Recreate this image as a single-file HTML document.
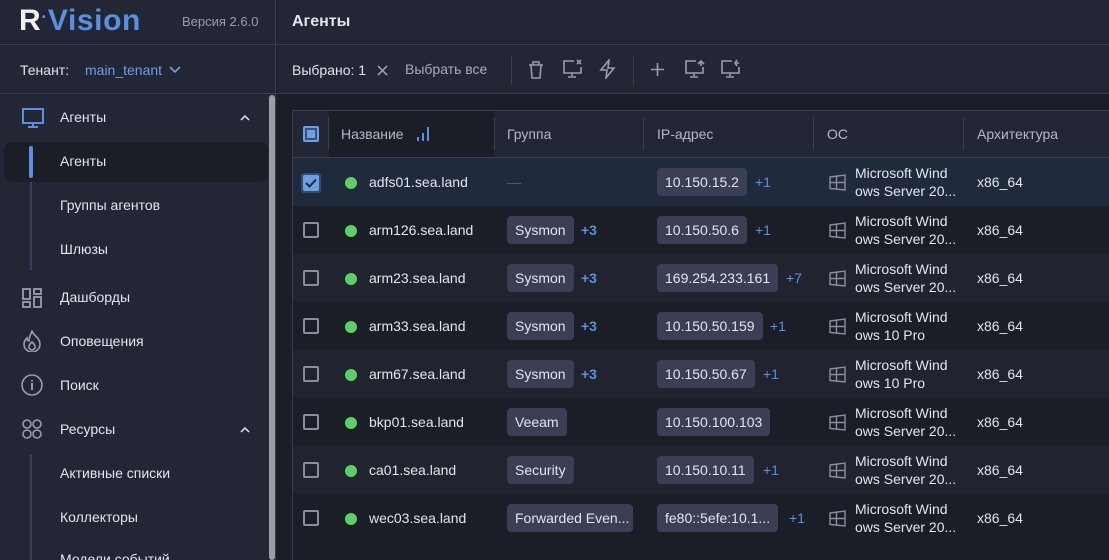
<!DOCTYPE html>
<html style="width:1109px;height:560px;overflow:hidden"><head><meta charset="utf-8"><style>
*{margin:0;padding:0;box-sizing:border-box}
body{width:1109px;height:560px;overflow:hidden;background:#1b1d27;font-family:"Liberation Sans",sans-serif;color:#e3e5ec;font-size:14px;position:relative}
.a{position:absolute}
.sb{left:0;top:0;width:276px;height:560px;background:#232634;border-right:1px solid #3a3e52}
.hl{height:1px;background:#3a3e52}
.nav{left:60px;font-size:14px;color:#e3e5ec}
.tag{position:absolute;height:28px;line-height:28px;padding:0 8px;background:#3b3f55;border-radius:4px;color:#e3e5ec;font-size:14px;white-space:nowrap}
.plus{position:absolute;color:#5b8fe0;font-size:14px}
.row{position:absolute;left:293px;width:816px;height:48px}
.cb{position:absolute;left:303px;width:16px;height:16px;border:2px solid #8a8d9b;border-radius:2px}
.dot{position:absolute;left:345px;width:12px;height:12px;border-radius:50%;background:#5fcf65}
.os{position:absolute;left:855px;font-size:14px;line-height:18px;color:#e3e5ec}
.th{position:absolute;top:126px;color:#b4b8c6;font-size:14px}
.sep{position:absolute;top:118px;width:1px;height:32px;background:#3a3e52}
</style></head><body>
<div class="a sb"></div>
<div class="a" style="left:19px;top:4px;font-size:30px;font-weight:bold;letter-spacing:0.6px;white-space:nowrap"><span style="color:#f0f0f2">R</span><span style="color:#5b8fe0;font-size:18px;vertical-align:7px">·</span><span style="color:#5b8fe0">Vision</span></div>
<div class="a" style="left:182px;top:14px;font-size:13px;color:#9a9dab">Версия 2.6.0</div>
<div class="a hl" style="left:0;top:44px;width:1109px"></div>
<div class="a" style="left:20px;top:62px;font-size:14px;color:#e3e5ec">Тенант:</div>
<div class="a" style="left:85px;top:62px;font-size:14px;color:#6d9ee8">main_tenant</div>
<svg class="a" style="left:169px;top:66px" width="12" height="8"><path d="M1 1l5 5 5-5" stroke="#6d9ee8" stroke-width="1.6" fill="none"/></svg>
<div class="a hl" style="left:0;top:93px;width:1109px"></div>
<div class="a" style="left:269px;top:95px;width:6px;height:465px;background:#9a9ca6;border-radius:3px"></div>
<svg class="a" style="left:22px;top:108px" width="22" height="20"><rect x="1" y="1" width="20" height="14" fill="none" stroke="#5b8fe0" stroke-width="2"/><path d="M11 15v3M6 19h10" stroke="#5b8fe0" stroke-width="2"/></svg>
<div class="a nav" style="top:109px">Агенты</div>
<svg class="a" style="left:240px;top:114px" width="10" height="7"><path d="M1 6l4-4 4 4" stroke="#e3e5ec" stroke-width="1.5" fill="none"/></svg>
<div class="a" style="left:4px;top:142px;width:264px;height:40px;background:#1b1d27;border-radius:8px"></div>
<div class="a" style="left:29px;top:146px;width:4px;height:32px;background:#5b8fe0;border-radius:2px"></div>
<div class="a" style="left:30px;top:182px;width:2px;height:88px;background:#3a3e60"></div>
<div class="a nav" style="top:153px">Агенты</div>
<div class="a nav" style="top:197px">Группы агентов</div>
<div class="a nav" style="top:241px">Шлюзы</div>
<svg class="a" style="left:22px;top:288px" width="20" height="20" fill="none" stroke="#9a9dab" stroke-width="1.8"><rect x="1" y="1" width="7" height="10"/><rect x="12" y="1" width="7" height="5"/><rect x="1" y="14" width="7" height="5"/><rect x="12" y="9" width="7" height="10"/></svg>
<div class="a nav" style="top:289px">Дашборды</div>
<svg class="a" style="left:22px;top:330px" width="20" height="22" fill="none" stroke="#9a9dab" stroke-width="1.6"><path d="M10 1c1 4 8 7 8 13a8 8 0 0 1-16 0c0-3 2-5 3-6 0 2 1 3 2 3 0-4 2-7 3-10z"/><path d="M10 12c2 2 3 3 3 5a3 3 0 0 1-6 0c0-2 1-3 3-5z"/></svg>
<div class="a nav" style="top:333px">Оповещения</div>
<svg class="a" style="left:21px;top:374px" width="22" height="22" fill="none" stroke="#9a9dab" stroke-width="1.6"><circle cx="11" cy="11" r="10"/><path d="M11 9v7M11 6v1.5" stroke-width="2"/></svg>
<div class="a nav" style="top:377px">Поиск</div>
<svg class="a" style="left:22px;top:419px" width="20" height="20" fill="none" stroke="#9a9dab" stroke-width="1.6"><circle cx="5" cy="5" r="4"/><circle cx="15" cy="5" r="4"/><circle cx="5" cy="15" r="4"/><circle cx="15" cy="15" r="4"/></svg>
<div class="a nav" style="top:421px">Ресурсы</div>
<svg class="a" style="left:240px;top:426px" width="10" height="7"><path d="M1 6l4-4 4 4" stroke="#e3e5ec" stroke-width="1.5" fill="none"/></svg>
<div class="a" style="left:30px;top:454px;width:2px;height:106px;background:#3a3e60"></div>
<div class="a nav" style="top:465px">Активные списки</div>
<div class="a nav" style="top:509px">Коллекторы</div>
<div class="a nav" style="top:551px">Модели событий</div>
<div class="a" style="left:277px;top:0;width:832px;height:93px;background:#232634"></div>
<div class="a hl" style="left:277px;top:44px;width:832px"></div>
<div class="a hl" style="left:277px;top:93px;width:832px"></div>
<div class="a" style="left:292px;top:13px;font-size:16px;font-weight:bold;color:#e3e5ec">Агенты</div>
<div class="a" style="left:292px;top:62px;font-size:14px">Выбрано: 1</div>
<svg class="a" style="left:377px;top:65px" width="11" height="11"><path d="M1 1l9 9M10 1l-9 9" stroke="#9a9dab" stroke-width="1.6"/></svg>
<div class="a" style="left:405px;top:61px;font-size:14px;color:#a8acbb">Выбрать все</div>
<div class="a" style="left:511px;top:55px;width:1px;height:30px;background:#3a3e52"></div>
<div class="a" style="left:633px;top:55px;width:1px;height:30px;background:#3a3e52"></div>
<svg class="a" style="left:526px;top:60px" width="20" height="20" fill="none" stroke="#9a9dab" stroke-width="1.6"><path d="M3 5h14M7 5V2h6v3M5 5l1 13h8l1-13"/></svg>
<svg class="a" style="left:562px;top:59px" width="22" height="20" fill="none" stroke="#9a9dab" stroke-width="1.6"><path d="M12 2H2v12h17V8M10 14v3M6 18h8M15 1l4 4M19 1l-4 4"/></svg>
<svg class="a" style="left:598px;top:59px" width="20" height="20" fill="none" stroke="#9a9dab" stroke-width="1.6"><path d="M11 1L3 11h6l-1 8 8-10h-6z"/></svg>
<svg class="a" style="left:650px;top:62px" width="15" height="15"><path d="M7.5 1v13M1 7.5h13" stroke="#9a9dab" stroke-width="1.6"/></svg>
<svg class="a" style="left:684px;top:59px" width="22" height="20" fill="none" stroke="#9a9dab" stroke-width="1.6"><path d="M12 2H2v12h17V8M10 14v3M6 18h8M14 5l3-3 3 3M17 2v5"/></svg>
<svg class="a" style="left:720px;top:59px" width="22" height="20" fill="none" stroke="#9a9dab" stroke-width="1.6"><path d="M12 2H2v12h17V8M10 14v3M6 18h8M15 4h4M17 1l-2 3 2 3"/></svg>
<div class="a" style="left:292px;top:110px;width:817px;height:450px;background:#1b1d27;border-left:1px solid #3a3e52;border-top:1px solid #3a3e52"></div>
<div class="a" style="left:293px;top:111px;width:816px;height:47px;background:#232634;border-bottom:1px solid #3a3e52"></div>
<div class="a" style="left:329px;top:111px;width:165px;height:46px;background:#1b1d27"></div>
<div class="a" style="left:303px;top:126px;width:16px;height:16px;border:2px solid #6d9ee8;border-radius:2px;background:#3d4e70"><div style="margin:2px;width:8px;height:8px;background:#6d9ee8"></div></div>
<div class="sep" style="left:328px"></div><div class="sep" style="left:494px"></div><div class="sep" style="left:643px"></div><div class="sep" style="left:813px"></div><div class="sep" style="left:963px"></div>
<div class="th" style="left:341px">Название</div>
<svg class="a" style="left:416px;top:126px" width="14" height="16"><path d="M2 11v4M7 7v8M12 1v14" stroke="#5b8fe0" stroke-width="2"/></svg>
<div class="th" style="left:507px">Группа</div>
<div class="th" style="left:657px">IP-адрес</div>
<div class="th" style="left:827px">ОС</div>
<div class="th" style="left:977px">Архитектура</div>
<div class="row" style="top:158px;background:#1f2a3d"></div>
<div class="row" style="top:254px;background:#21242f"></div>
<div class="row" style="top:350px;background:#21242f"></div>
<div class="row" style="top:446px;background:#21242f"></div>
<div class="a" style="left:301px;top:173px;width:20px;height:20px;background:#3a4a6a;border-radius:3px"></div>
<div class="a" style="left:303px;top:175px;width:16px;height:16px;background:#6d9ee8;border-radius:2px"></div>
<svg class="a" style="left:305px;top:178px" width="12" height="10"><path d="M1 5l3.5 3.5L11 1.5" stroke="#1f2a3d" stroke-width="2" fill="none"/></svg>
<div class="dot" style="top:177px"></div>
<div class="a" style="left:369px;top:174px">adfs01.sea.land</div>
<div class="a" style="left:507px;top:174px;color:#555a6a">—</div>
<div class="tag" style="left:657px;top:168px">10.150.15.2</div><div class="plus" style="left:755px;top:174px">+1</div>
<div class="cb" style="top:222px"></div><div class="dot" style="top:225px"></div>
<div class="a" style="left:369px;top:222px">arm126.sea.land</div>
<div class="tag" style="left:507px;top:216px">Sysmon</div><div class="plus" style="left:581px;top:222px;font-weight:bold">+3</div>
<div class="tag" style="left:657px;top:216px">10.150.50.6</div><div class="plus" style="left:755px;top:222px">+1</div>
<div class="cb" style="top:270px"></div><div class="dot" style="top:273px"></div>
<div class="a" style="left:369px;top:270px">arm23.sea.land</div>
<div class="tag" style="left:507px;top:264px">Sysmon</div><div class="plus" style="left:581px;top:270px;font-weight:bold">+3</div>
<div class="tag" style="left:657px;top:264px">169.254.233.161</div><div class="plus" style="left:786px;top:270px">+7</div>
<div class="cb" style="top:318px"></div><div class="dot" style="top:321px"></div>
<div class="a" style="left:369px;top:318px">arm33.sea.land</div>
<div class="tag" style="left:507px;top:312px">Sysmon</div><div class="plus" style="left:581px;top:318px;font-weight:bold">+3</div>
<div class="tag" style="left:657px;top:312px">10.150.50.159</div><div class="plus" style="left:770px;top:318px">+1</div>
<div class="cb" style="top:366px"></div><div class="dot" style="top:369px"></div>
<div class="a" style="left:369px;top:366px">arm67.sea.land</div>
<div class="tag" style="left:507px;top:360px">Sysmon</div><div class="plus" style="left:581px;top:366px;font-weight:bold">+3</div>
<div class="tag" style="left:657px;top:360px">10.150.50.67</div><div class="plus" style="left:763px;top:366px">+1</div>
<div class="cb" style="top:414px"></div><div class="dot" style="top:417px"></div>
<div class="a" style="left:369px;top:414px">bkp01.sea.land</div>
<div class="tag" style="left:507px;top:408px">Veeam</div>
<div class="tag" style="left:657px;top:408px">10.150.100.103</div>
<div class="cb" style="top:462px"></div><div class="dot" style="top:465px"></div>
<div class="a" style="left:369px;top:462px">ca01.sea.land</div>
<div class="tag" style="left:507px;top:456px">Security</div>
<div class="tag" style="left:657px;top:456px">10.150.10.11</div><div class="plus" style="left:763px;top:462px">+1</div>
<div class="cb" style="top:510px"></div><div class="dot" style="top:513px"></div>
<div class="a" style="left:369px;top:510px">wec03.sea.land</div>
<div class="tag" style="left:507px;top:504px;width:126px;overflow:hidden">Forwarded Even...</div>
<div class="tag" style="left:657px;top:504px">fe80::5efe:10.1...</div><div class="plus" style="left:789px;top:510px">+1</div>
<svg class="a" style="left:829px;top:174px" width="17" height="354" fill="none" stroke="#8a8d9b" stroke-width="1.4">
<path d="M1 3l15-2v15l-15-1.5zM1 8.5h15M7.5 2v13"/>
<path transform="translate(0,48)" d="M1 3l15-2v15l-15-1.5zM1 8.5h15M7.5 2v13"/>
<path transform="translate(0,96)" d="M1 3l15-2v15l-15-1.5zM1 8.5h15M7.5 2v13"/>
<path transform="translate(0,144)" d="M1 3l15-2v15l-15-1.5zM1 8.5h15M7.5 2v13"/>
<path transform="translate(0,192)" d="M1 3l15-2v15l-15-1.5zM1 8.5h15M7.5 2v13"/>
<path transform="translate(0,240)" d="M1 3l15-2v15l-15-1.5zM1 8.5h15M7.5 2v13"/>
<path transform="translate(0,288)" d="M1 3l15-2v15l-15-1.5zM1 8.5h15M7.5 2v13"/>
<path transform="translate(0,336)" d="M1 3l15-2v15l-15-1.5zM1 8.5h15M7.5 2v13"/>
</svg>
<div class="os" style="top:164px">Microsoft Wind<br>ows Server 20...</div>
<div class="os" style="top:212px">Microsoft Wind<br>ows Server 20...</div>
<div class="os" style="top:260px">Microsoft Wind<br>ows Server 20...</div>
<div class="os" style="top:308px">Microsoft Wind<br>ows 10 Pro</div>
<div class="os" style="top:356px">Microsoft Wind<br>ows 10 Pro</div>
<div class="os" style="top:404px">Microsoft Wind<br>ows Server 20...</div>
<div class="os" style="top:452px">Microsoft Wind<br>ows Server 20...</div>
<div class="os" style="top:500px">Microsoft Wind<br>ows Server 20...</div>
<div class="a" style="left:977px;top:174px">x86_64</div>
<div class="a" style="left:977px;top:222px">x86_64</div>
<div class="a" style="left:977px;top:270px">x86_64</div>
<div class="a" style="left:977px;top:318px">x86_64</div>
<div class="a" style="left:977px;top:366px">x86_64</div>
<div class="a" style="left:977px;top:414px">x86_64</div>
<div class="a" style="left:977px;top:462px">x86_64</div>
<div class="a" style="left:977px;top:510px">x86_64</div>
</body></html>
